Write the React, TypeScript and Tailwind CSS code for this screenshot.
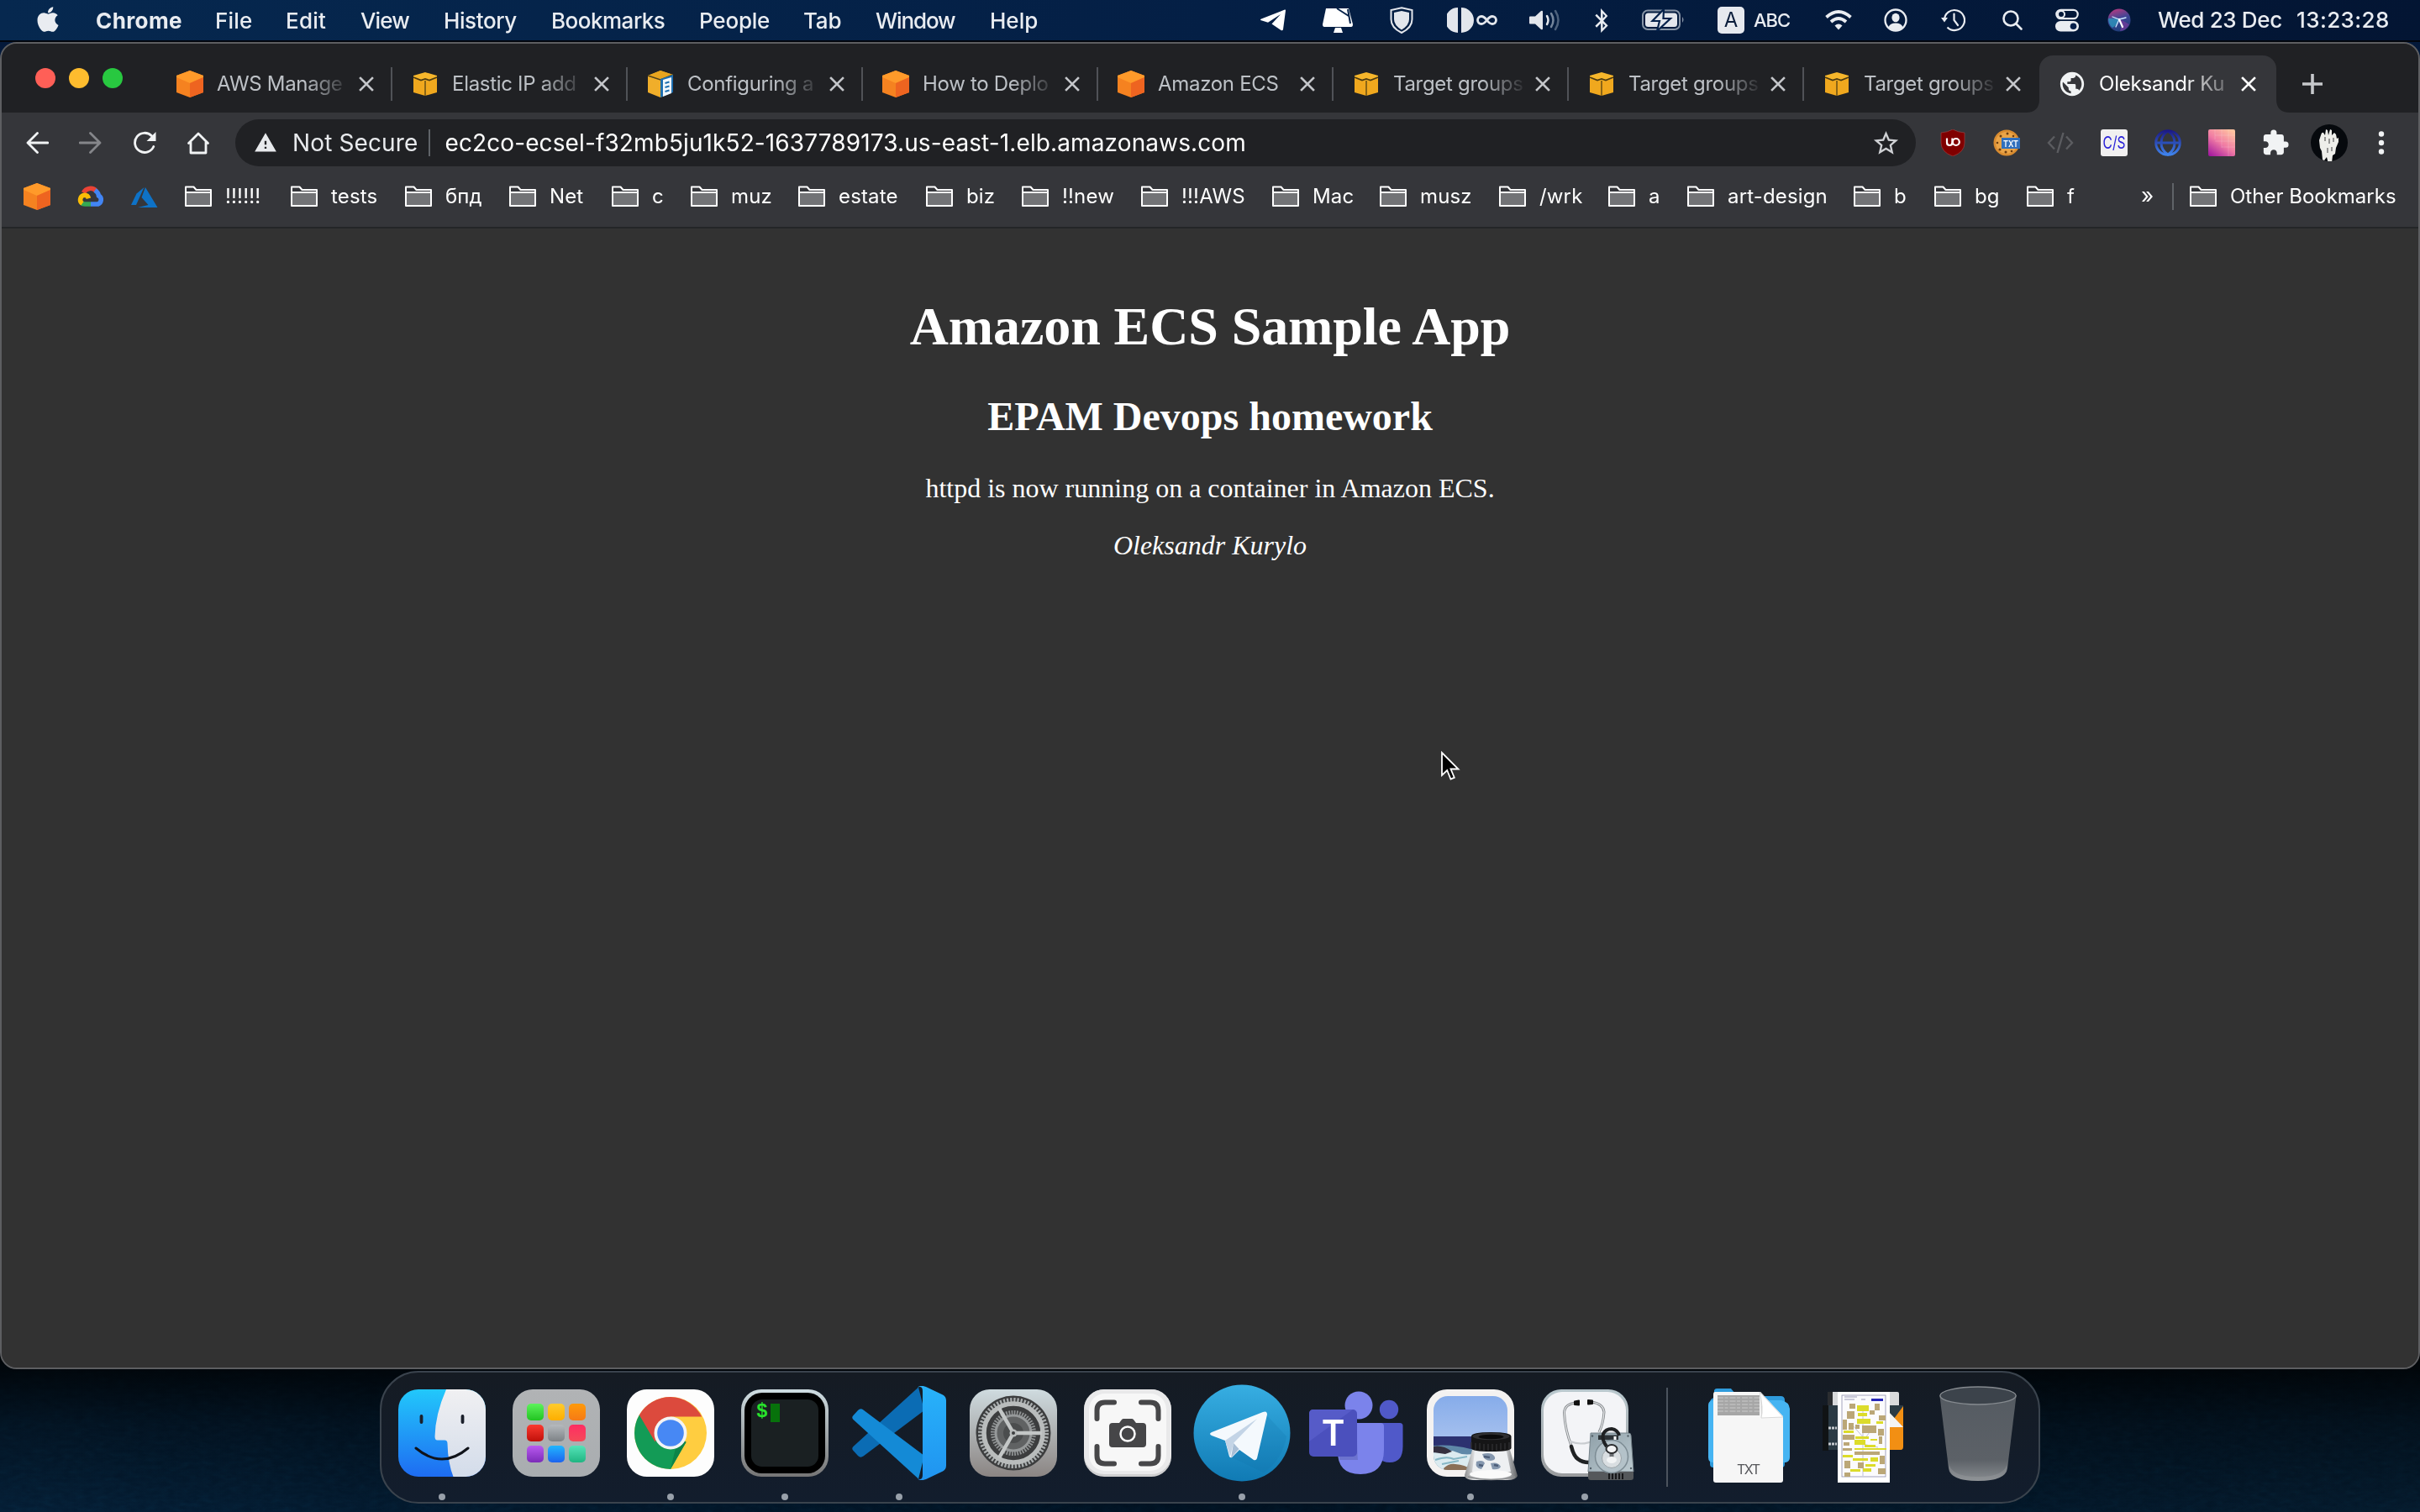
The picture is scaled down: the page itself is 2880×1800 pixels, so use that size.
import React from "react";
import { FaApple, FaBluetoothB } from "react-icons/fa";
import { MdWarning, MdStarBorder, MdExtension, MdPublic } from "react-icons/md";

/* ---------- favicons ---------- */

const OrangeCube = () => (
  <svg viewBox="0 0 32 32" className="size-8 shrink-0">
    <path d="M16 0 32 6v20l-16 6L0 26V6z" fill="#f58220" />
    <path d="M16 0 32 6v2L16 15 0 8V6z" fill="#ff9a2a" />
    <path d="M16 15 32 8v18l-16 6z" fill="#ee6420" />
  </svg>
);

const YellowCube = () => (
  <svg viewBox="0 0 32 32" className="size-8 shrink-0">
    <path d="M2 7h28v19l-14 4-14-4z" fill="#f0a81e" />
    <path d="M16 2 30 6v3l-14 4L2 9V6z" fill="#f6b62b" />
    <path d="M2 8l9 3.500 5-1.500 5 1.500L30 8" stroke="#4c3a10" strokeWidth="1.800" fill="none" />
    <path d="M16 12v18" stroke="#8a6516" strokeWidth="2" />
  </svg>
);

const DocCube = () => (
  <svg viewBox="0 0 32 32" className="size-8 shrink-0">
    <path d="M16 0 31 5v20l-15 7L1 26V6z" fill="#f0ae2a" />
    <path d="M16 0 31 5 16 10 1 6z" fill="#e9a51f" />
    <path d="M1 6l15 5 15-6" stroke="#51421b" strokeWidth="1.6" fill="none" />
    <path d="M16 10 31 5v21l-15 6z" fill="#1f6fb0" />
    <path d="M19 11l10-3v19l-10 4z" fill="#f3f8fc" />
    <path d="M21.500 15l5-1.500M21.500 20l5-1.500M21.500 25l5-1.500" stroke="#1f6fb0" strokeWidth="2" />
  </svg>
);

const CloseIcon = ({ className }: { className: string }) => (
  <svg viewBox="0 0 18 18" className={className} stroke="currentColor" strokeWidth="2.600" strokeLinecap="square">
    <path d="M2 2l14 14M16 2 2 16" />
  </svg>
);

/* ---------- menu bar ---------- */

const menus: [string, string][] = [
  ["File", "w-[84px] tracking-[0.2px]"],
  ["Edit", "w-[89px] tracking-[0.2px]"],
  ["View", "w-[99px] tracking-[-0.9px]"],
  ["History", "w-[128px] tracking-[-0.4px]"],
  ["Bookmarks", "w-[176px] tracking-[-0.5px]"],
  ["People", "w-[124px] tracking-[-0.2px]"],
  ["Tab", "w-[86px] tracking-[-0.2px]"],
  ["Window", "w-[136px] tracking-[-1.1px]"],
  ["Help", "w-[80px]"],
];

function MenuBar() {
  return (
    <header className="flex h-[50px] items-center border-b-2 border-[#02060e] bg-linear-to-r from-[#06284f] via-[#041f45] to-[#031533] text-[26px] font-medium text-[#e9ecf1]">
      <div className="flex w-[114px] justify-center pb-[3px]">
        <FaApple className="size-[34px]" />
      </div>
      <span className="w-[142px] font-bold tracking-[0.4px]">Chrome</span>
      {menus.map(([m, cls]) => (
        <span key={m} className={cls}>
          {m}
        </span>
      ))}

      <div className="ml-[242px] flex items-center">
        <svg viewBox="0 0 30 26" className="h-[26px] w-[30px] shrink-0" fill="#fff">
          <path d="M29 .5 1 11.500q-2 1 0 1.800l8 2.400L24 6 13.500 17.500 24.500 25q2 1 2.500-1L30 1.500Q30 0 29 .5z" />
        </svg>
        <svg viewBox="0 0 36 31" className="ml-11 h-[31px] w-9 shrink-0">
          <path d="M4 1h27l5 19q0 3-2 3H2q-2 0-2-3z" fill="#fff" />
          <path d="M15 24h7l2 6H13z" fill="#fff" />
          <path d="M17 1l14 9M30 2l3 17" stroke="#06234a" strokeWidth="2" />
        </svg>
        <svg viewBox="0 0 28 32" className="ml-11 h-8 w-7 shrink-0">
          <path d="M14 1.200 26.500 4v11q0 10-12.500 16Q1.500 25 1.500 15V4z" fill="none" stroke="#e3e6ec" strokeWidth="2" />
          <path d="M14 5 23 7v8q0 7-9 12.500Q5 22 5 15V7z" fill="#e3e6ec" />
        </svg>
        <svg viewBox="0 0 60 32" className="ml-10 h-8 w-[60px] shrink-0">
          <path d="M13 1v30A15 15 0 0 1 13 1zM17 1v30A15 15 0 0 0 17 1z" fill="#e3e6ec" />
          <path d="M47.500 16c-3-4-5-4.500-6.500-4.500a4.500 4.500 0 0 0 0 9c1.500 0 3.500-.5 6.500-4.500s5-4.500 6.500-4.500a4.500 4.500 0 0 1 0 9c-1.500 0-3.500-.5-6.500-4.500z" fill="none" stroke="#e3e6ec" strokeWidth="2.800" />
        </svg>
        <svg viewBox="0 0 37 26" className="ml-[38px] h-[26px] w-[37px] shrink-0" fill="none" strokeWidth="2.500" strokeLinecap="round">
          <path d="M1 8.500h6L14 2q2-1 2 1v20q0 2-2 1l-7-6.500H1q-1 0-1-1v-7q0-1 1-1z" fill="#e3e6ec" />
          <path d="M21 8q3 5 0 10" stroke="#e3e6ec" />
          <path d="M26 5q5 8 0 16" stroke="#75869c" />
          <path d="M31 2q7 11 0 22" stroke="#4d617c" />
        </svg>
        <FaBluetoothB className="ml-[37px] h-[29px] w-6 shrink-0" />
        <svg viewBox="0 0 51 26" className="ml-9 h-[26px] w-[51px] shrink-0">
          <rect x="1" y="1.500" width="44" height="22.500" rx="6" fill="none" stroke="#8693a5" strokeWidth="2" />
          <rect x="4" y="4.500" width="38" height="16.500" rx="3.500" fill="#e3e6ec" />
          <path d="M48 9q3 3.500 0 7z" fill="#8693a5" />
          <path d="M26 0 12.500 14H21l-3 12L34 11h-8.500z" fill="#e3e6ec" stroke="#05214a" strokeWidth="2.200" />
        </svg>
        <span className="ml-[39px] flex size-8 items-center justify-center rounded-[5px] bg-[#e6e9ef] text-[24px] font-normal text-[#0a1d3c]">A</span>
        <span className="ml-[11px] w-[45px] text-[22px] tracking-[-1px]">ABC</span>
        <svg viewBox="0 0 32 24" className="ml-10 h-6 w-8 shrink-0" fill="none" stroke="#e9ecf1" strokeWidth="3.800">
          <path d="M1.500 8.500q14.500-13 29 0M7 14q9-8 18 0" />
          <path d="M11.500 18.500q4.500-4 9 0L16 23.500z" fill="#e9ecf1" stroke="none" />
        </svg>
        <svg viewBox="0 0 28 28" className="ml-[38px] size-7 shrink-0">
          <circle cx="14" cy="14" r="12.500" fill="none" stroke="#e9ecf1" strokeWidth="2.300" />
          <ellipse cx="14" cy="11" rx="4.600" ry="5.300" fill="#e9ecf1" />
          <path d="M5.500 22.500Q7 17.500 14 17.500t8.500 5Q19 26 14 26t-8.500-3.500z" fill="#e9ecf1" />
        </svg>
        <svg viewBox="0 0 29 28" className="ml-10 h-7 w-[29px] shrink-0" fill="none" stroke="#e9ecf1" strokeWidth="2.200">
          <path d="M4 14A12 12 0 1 1 7.500 22.500" />
          <path d="M15.500 6.500V14l4.500 6" strokeLinecap="round" />
          <path d="M0 11h8l-4 5.500z" fill="#e9ecf1" stroke="none" />
        </svg>
        <svg viewBox="0 0 24 24" className="ml-11 size-6 shrink-0" fill="none" stroke="#e9ecf1" strokeWidth="2.600" strokeLinecap="round">
          <circle cx="10" cy="10" r="8.500" />
          <path d="M16.500 16.500 22.500 22.500" />
        </svg>
        <svg viewBox="0 0 28 28" className="ml-[39px] size-7 shrink-0">
          <rect x="1.300" y="1.800" width="25.400" height="10.400" rx="5.200" fill="none" stroke="#e9ecf1" strokeWidth="2.200" />
          <circle cx="7" cy="7" r="4" fill="none" stroke="#e9ecf1" strokeWidth="2" />
          <rect y="15" width="28" height="12.500" rx="6.200" fill="#e9ecf1" />
          <circle cx="21.500" cy="21.200" r="3.800" fill="#06204a" />
        </svg>
        <svg viewBox="0 0 28 28" className="ml-[34px] size-7 shrink-0">
          <defs>
            <linearGradient id="siri" x1=".3" y1="0" x2=".6" y2="1">
              <stop offset="0" stopColor="#b53a80" />
              <stop offset=".45" stopColor="#3d4596" />
              <stop offset="1" stopColor="#1c3c76" />
            </linearGradient>
          </defs>
          <circle cx="14" cy="14" r="13.500" fill="url(#siri)" />
          <path d="M1 12q7-1 13 1-2 7-8 10-5-4-5-11z" fill="#2aa6c4" opacity=".65" />
          <path d="M15 13q3 6 0 14 8-1 11-8-5-3-11-6z" fill="#7a3a9c" opacity=".7" />
          <path d="M6 10l8 3 8-2M14 13l-4 9" stroke="#cfe6ff" strokeWidth="1.300" strokeLinecap="round" fill="none" />
          <path d="M14 13l4 9" stroke="#fff" strokeWidth="2.200" strokeLinecap="round" />
        </svg>
        <span className="ml-8 w-[165px] pb-[2px] tracking-[-0.35px]">Wed 23 Dec</span>
        <span className="pb-[2px] tracking-[0.4px]">13:23:28</span>
      </div>
    </header>
  );
}

/* ---------- tab strip ---------- */

const tabs: { title: string; icon: () => React.JSX.Element }[] = [
  { title: "AWS Manage", icon: OrangeCube },
  { title: "Elastic IP add", icon: YellowCube },
  { title: "Configuring a", icon: DocCube },
  { title: "How to Deplo", icon: OrangeCube },
  { title: "Amazon ECS", icon: OrangeCube },
  { title: "Target groups", icon: YellowCube },
  { title: "Target groups", icon: YellowCube },
  { title: "Target groups", icon: YellowCube },
];

function TabStrip() {
  return (
    <div className="flex h-[82px] items-end bg-[#202124] text-[24px]">
      <div className="flex w-[185px] gap-4 self-start pt-[29px] pl-10">
        <span className="size-6 rounded-full bg-[#ff5f57]" />
        <span className="size-6 rounded-full bg-[#febc2e]" />
        <span className="size-6 rounded-full bg-[#28c840]" />
      </div>
      {tabs.map(({ title, icon: Icon }, i) => (
        <div key={i} className="flex h-[68px] w-[280px] shrink-0 items-center pl-[23px]">
          <Icon />
          <span
            className={
              title === "Amazon ECS"
                ? "ml-4 w-[154px] overflow-hidden whitespace-nowrap tracking-[-0.3px] text-[#bdc1c6]"
                : "ml-4 w-[154px] overflow-hidden whitespace-nowrap tracking-[-0.3px] text-[#bdc1c6] [mask-image:linear-gradient(to_right,black_68%,transparent_104%)]"
            }
          >
            {title}
          </span>
          <CloseIcon className="ml-[15px] size-[18px] shrink-0 text-[#c3c5c9]" />
          {i < 7 && <span className="ml-auto h-10 w-[2px] bg-[#505257]" />}
        </div>
      ))}
      <div className="relative flex h-[68px] w-[282px] shrink-0 items-center rounded-t-[16px] bg-[#35363a] pl-[22px]">
        <svg viewBox="0 0 16 16" className="absolute bottom-0 -left-4 size-4" fill="#35363a">
          <path d="M16 0v16H0Q16 16 16 0z" />
        </svg>
        <svg viewBox="0 0 16 16" className="absolute -right-4 bottom-0 size-4" fill="#35363a">
          <path d="M0 0v16h16Q0 16 0 0z" />
        </svg>
        <MdPublic className="size-[34px] shrink-0 text-[#f1f3f4]" />
        <span className="ml-[15px] w-[152px] overflow-hidden whitespace-nowrap tracking-[-0.2px] text-white [mask-image:linear-gradient(to_right,black_66%,transparent_112%)]">
          Oleksandr Ku
        </span>
        <CloseIcon className="ml-[17px] size-[18px] shrink-0 text-white" />
      </div>
      <div className="flex h-[68px] w-[86px] items-center justify-center">
        <svg viewBox="0 0 24 24" className="size-6" stroke="#c6c8cb" strokeWidth="3.600">
          <path d="M12 0v24M0 12h24" />
        </svg>
      </div>
    </div>
  );
}

/* ---------- toolbar ---------- */

function Toolbar() {
  return (
    <div className="flex h-[72px] items-center bg-[#35363a]">
      <div className="flex w-[278px] items-center gap-9 pl-7 text-[#f1f3f4]">
        <svg viewBox="0 0 28 28" className="size-7" fill="none" stroke="currentColor" strokeWidth="2.800" strokeLinecap="round" strokeLinejoin="round">
          <path d="M14.500 2.500 3 14l11.500 11.500M3.500 14H27" />
        </svg>
        <svg viewBox="0 0 28 28" className="size-7" fill="none" stroke="#85868a" strokeWidth="2.800" strokeLinecap="round" strokeLinejoin="round">
          <path d="M13.500 2.500 25 14 13.500 25.500M24.500 14H1" />
        </svg>
        <svg viewBox="0 0 28 28" className="size-7" fill="none" stroke="currentColor" strokeWidth="2.800" strokeLinecap="round">
          <path d="M22.500 5.800A11.600 11.600 0 1 0 24.800 18.500" />
          <path d="M27.500 1v11H16.500z" fill="currentColor" stroke="none" />
        </svg>
        <svg viewBox="0 0 28 28" className="size-7" fill="none" stroke="currentColor" strokeWidth="2.800" strokeLinejoin="round" strokeLinecap="round">
          <path d="M2.500 14.500 14 3l11.500 11.500M5 13.500V26h18V13.500" />
        </svg>
      </div>
      <div className="flex h-14 w-[2000px] shrink-0 items-center rounded-full bg-[#202124] pr-[18px] pl-[22px] text-[28px] tracking-[0.13px] text-white">
        <MdWarning className="size-[28px] text-[#e8eaed]" />
        <span className="ml-[18px] text-[#e8eaed]">Not Secure</span>
        <span className="ml-[13px] h-8 w-[2px] bg-[#5f6368]" />
        <span className="ml-[17px] tracking-[0.11px]">ec2co-ecsel-f32mb5ju1k52-1637789173.us-east-1.elb.amazonaws.com</span>
        <MdStarBorder className="ml-auto size-[35px] text-[#cfd1d4]" />
      </div>
      <div className="flex items-center gap-8 pl-[28px]">
        <svg viewBox="0 0 32 32" className="size-8">
          <path d="M16 0q6 3.500 14 4v12q0 11-14 16Q2 27 2 16V4q8-.5 14-4z" fill="#800000" stroke="#a54a4a" strokeWidth=".6" />
          <path d="M9 10.500v5q0 3.500 3.200 3.500t3.200-3.500v-5" fill="none" stroke="#fff" strokeWidth="2.200" />
          <circle cx="19.800" cy="15" r="4" fill="none" stroke="#fff" strokeWidth="2.200" />
        </svg>
        <svg viewBox="0 0 32 32" className="size-8">
          <circle cx="16" cy="16" r="15.500" fill="#d98c30" />
          <circle cx="16" cy="16" r="13" fill="#eaa447" />
          <g fill="#6b3d10">
            <circle cx="9" cy="8" r="1.500" />
            <circle cx="17" cy="5" r="1.500" />
            <circle cx="24" cy="8" r="1.300" />
            <circle cx="5" cy="16" r="1.300" />
            <circle cx="8" cy="24" r="1.600" />
            <circle cx="15" cy="27" r="1.500" />
            <circle cx="22" cy="26" r="1.300" />
          </g>
          <rect x="10" y="10" width="22" height="13" fill="#2f6fbd" />
          <text x="21" y="20.500" fontSize="11" fontWeight="600" textAnchor="middle" fill="#fff" fontFamily="Inter, sans-serif" textLength="18" lengthAdjust="spacingAndGlyphs">TXT</text>
        </svg>
        <svg viewBox="0 0 32 32" className="size-8" fill="none" stroke="#5b5c60" strokeWidth="2.400">
          <path d="M9 8.500 2 16l7 7.500M23 8.500l7 7.500-7 7.500M19.500 4l-7 24" />
        </svg>
        <svg viewBox="0 0 32 32" className="size-8">
          <rect width="32" height="32" rx="3" fill="#f1f0f0" />
          <text x="16" y="23" fontSize="20" textAnchor="middle" fill="#2a22d8" fontFamily="Inter, sans-serif" textLength="27" lengthAdjust="spacingAndGlyphs">C/S</text>
        </svg>
        <svg viewBox="0 0 32 32" className="size-8" fill="none" strokeWidth="3">
          <defs>
            <linearGradient id="globe" x1="0" y1="0" x2="0" y2="1">
              <stop offset="0" stopColor="#1c1a86" />
              <stop offset="1" stopColor="#3f83ec" />
            </linearGradient>
          </defs>
          <circle cx="16" cy="16" r="14.300" stroke="url(#globe)" />
          <path d="M16 2q-8 5-8 14t8 14q8-5 8-14T16 2z" stroke="url(#globe)" />
          <path d="M3 16h26" stroke="#2b4fb8" />
        </svg>
        <svg viewBox="0 0 32 32" className="size-8">
          <defs>
            <linearGradient id="swatch" x1=".1" y1="1" x2=".8" y2="0">
              <stop offset="0" stopColor="#a3199f" />
              <stop offset=".5" stopColor="#f07ba4" />
              <stop offset="1" stopColor="#ffc3a0" />
            </linearGradient>
          </defs>
          <rect width="32" height="32" rx="2" fill="url(#swatch)" />
          <path d="M8 0v12M16 0v22M24 0v32M8 7h24M8 14h24M16 21h16" stroke="#fff" strokeOpacity=".16" />
        </svg>
        <MdExtension className="-mx-px size-[34px] text-[#f1f3f4]" />
        <svg viewBox="0 0 44 44" className="-mx-[6px] size-11">
          <circle cx="22" cy="22" r="22" fill="#06090d" />
          <path d="M12 13q1-4 3-3l2 3 1-7 2 1 1 6 2-7 2 1v6l3-3 2 2 1 5 2-1v5l-3 7-1 7-3 2-1 9-4 1-2-8-3 4-2-1-1-10-2-4-1-9z" fill="#eeeeea" />
          <path d="M17 15v5M22 17v6M27 16v5M20 28v6M25 27v5" stroke="#666" strokeWidth="1.300" />
        </svg>
      </div>
      <svg viewBox="0 0 8 28" className="ml-[42px] h-7 w-2" fill="#f1f3f4">
        <circle cx="4" cy="3.500" r="3.200" />
        <circle cx="4" cy="14" r="3.200" />
        <circle cx="4" cy="24.500" r="3.200" />
      </svg>
    </div>
  );
}

/* ---------- bookmarks ---------- */

const Folder = () => (
  <svg viewBox="0 0 32 26" className="h-[26px] w-8 shrink-0">
    <path d="M1 24V1.500h9.500l3 3.500H31v19z" fill="#35363a" stroke="#fff" strokeWidth="2" strokeLinejoin="round" />
    <path d="M2 9h28v14H2z" fill="#727376" />
    <path d="M1 8h30" stroke="#fff" strokeWidth="2" />
  </svg>
);

const bookmarks: [string, string][] = [
  ["!!!!!!", "w-[126px]"],
  ["tests", "w-[136px]"],
  ["бпд", "w-[124px]"],
  ["Net", "w-[122px]"],
  ["c", "w-[94px]"],
  ["muz", "w-[128px]"],
  ["estate", "w-[152px]"],
  ["biz", "w-[114px]"],
  ["!!new", "w-[142px]"],
  ["!!!AWS", "w-[156px]"],
  ["Mac", "w-[128px]"],
  ["musz", "w-[142px]"],
  ["/wrk", "w-[130px]"],
  ["a", "w-[94px]"],
  ["art-design", "w-[198px]"],
  ["b", "w-[96px]"],
  ["bg", "w-[110px]"],
  ["f", "w-[136px]"],
];

function BookmarksBar() {
  return (
    <div className="flex h-[66px] items-center border-b-2 border-[#242527] bg-[#35363a] pb-[8px] text-[24px] tracking-[0.15px] text-white">
      <div className="flex w-[218px] items-center gap-8 pl-[26px]">
        <OrangeCube />
        <svg viewBox="0 0 32 32" className="size-8" fill="none" strokeWidth="5.600">
          <path d="M7.500 11.500A9 9 0 0 1 22.500 9.500" stroke="#ea4335" />
          <path d="M21 8.500q4 2.500 4.500 6.500A5.500 5.500 0 0 1 24.500 25H16" stroke="#4285f4" />
          <path d="M16 25H9q-2.500 0-4-1.500" stroke="#34a853" />
          <path d="M6 24.300a5.500 5.500 0 0 1 2.500-10q4 0 5 4" stroke="#fbbc05" />
        </svg>
        <svg viewBox="0 0 32 32" className="size-8" fill="#0e72c6">
          <path d="M15.500 5 6.500 12.500 0 26h6z" />
          <path d="M17 5 12.500 17 20.500 26 8 29h23.500z" />
        </svg>
      </div>
      {bookmarks.map(([label, w]) => (
        <div key={label} className={`flex shrink-0 items-center gap-[16px] ${w}`}>
          <Folder />
          {label}
        </div>
      ))}
      <span className="flex w-[37px] justify-start pb-1 text-[26px]">»</span>
      <span className="h-8 w-[2px] bg-[#5f6368]" />
      <div className="ml-[19px] flex items-center gap-[16px] tracking-[0px] whitespace-nowrap">
        <Folder />
        Other Bookmarks
      </div>
    </div>
  );
}

/* ---------- page ---------- */

function Page() {
  return (
    <main className="relative flex flex-1 flex-col items-center bg-[#323232] pt-20 font-['Liberation_Serif',serif] text-white">
      <h1 className="text-[64px] leading-[74px] font-bold tracking-[-0.1px]">Amazon ECS Sample App</h1>
      <h2 className="mt-[42px] text-[48px] leading-[55px] font-bold">EPAM Devops homework</h2>
      <p className="mt-10 text-[32px] leading-[37px]">httpd is now running on a container in Amazon ECS.</p>
      <p className="mt-[31px] text-[32px] leading-[37px] italic">Oleksandr Kurylo</p>
      <svg viewBox="0 0 24 36" className="absolute top-[622px] left-[1712px] h-9 w-6">
        <path d="M2 2v27l6.200-6 4.300 10.500 4.300-1.800L12.500 21.500H21.500z" fill="#000" stroke="#fff" strokeWidth="1.800" />
      </svg>
    </main>
  );
}

/* ---------- dock icons ---------- */

const Finder = () => (
  <svg viewBox="0 0 104 104" className="size-[104px]">
    <defs>
      <linearGradient id="fb" x1="0" y1="0" x2="0" y2="1">
        <stop offset="0" stopColor="#22c8fb" />
        <stop offset="1" stopColor="#1e6cf2" />
      </linearGradient>
      <linearGradient id="fw" x1="0" y1="0" x2="0" y2="1">
        <stop offset="0" stopColor="#f0f0f2" />
        <stop offset="1" stopColor="#d3dcea" />
      </linearGradient>
      <clipPath id="fc">
        <rect width="104" height="104" rx="24" />
      </clipPath>
    </defs>
    <g clipPath="url(#fc)">
      <rect width="104" height="104" fill="url(#fb)" />
      <path d="M57 0Q44 30 43.500 56q0 4.500 3 4.500H55q3.500 0 3.500 4Q59 88 65.500 104H104V0z" fill="url(#fw)" />
    </g>
    <path d="M27.500 32v7M76.500 32v7" stroke="#1a1f2a" strokeWidth="3.800" strokeLinecap="round" />
    <path d="M21 70q31 26 62 0" stroke="#10131a" strokeWidth="3" strokeLinecap="round" fill="none" />
  </svg>
);

const launchColors: [string, string][] = [
  ["#5df35c", "#22c322"], ["#ffcb2d", "#fdae00"], ["#ff9a0a", "#f57a16"],
  ["#fb3a2f", "#c0100a"], ["#b5b9bd", "#7d8286"], ["#ff2d63", "#f54a58"],
  ["#b95af0", "#7b2bb8"], ["#21b6ff", "#1c63ee"], ["#55e3b8", "#20b582"],
];

const Launchpad = () => (
  <div className="grid size-[104px] grid-cols-[repeat(3,20px)] grid-rows-[repeat(3,20px)] content-center justify-center gap-[5px] rounded-[24px] bg-linear-to-b from-[#b1b3b5] to-[#a9adb0]">
    {launchColors.map(([a, b]) => (
      <span key={a} className="rounded-[5px]" style={{ backgroundImage: `linear-gradient(${a}, ${b})` }} />
    ))}
  </div>
);

const ChromeApp = () => (
  <svg viewBox="0 0 104 104" className="size-[104px]">
    <rect width="104" height="104" rx="24" fill="#fdfdfd" />
    <circle cx="52" cy="52" r="43" fill="#ffcd40" />
    <path d="M52 52 14.800 30.500A43 43 0 0 0 52 95L70.600 62.700z" fill="#139b56" />
    <path d="M52 52 70.600 62.700 52 95 58 70z" fill="#0d8448" />
    <path d="M52 9A43 43 0 0 1 89.200 32.500H52L33.500 62.500 14.800 30.500A43 43 0 0 1 52 9z" fill="#dc4a3d" />
    <circle cx="52" cy="52" r="19.500" fill="#f4f4f4" />
    <circle cx="52" cy="52" r="15.800" fill="#4788f4" />
  </svg>
);

const Terminal = () => (
  <div className="size-[104px] rounded-[24px] bg-linear-to-b from-[#cfdde2] to-[#767676] p-1">
    <div className="size-full rounded-[21px] bg-black p-2">
      <div className="flex size-full items-start gap-[3px] rounded-[13px] bg-[#1a2022] pt-[3px] pl-[6px] font-['Liberation_Mono',monospace] text-[23px] leading-[24px] font-bold text-[#28e22c]">
        $<span className="mt-[2px] h-[22px] w-[11px] bg-[#07720b]" />
      </div>
    </div>
  </div>
);

const VsCode = () => (
  <svg viewBox="0 0 112 112" className="size-[112px]">
    <defs>
      <linearGradient id="vs" x1="0" y1="0" x2="0" y2="1">
        <stop offset="0" stopColor="#28b2fa" />
        <stop offset="1" stopColor="#2094f0" />
      </linearGradient>
    </defs>
    <path d="M79 1.500 1.500 72q-2.500 2.500 0 5L7 83q3 3 6.500.5L86 29z" fill="#0b6cb4" />
    <path d="M79 110.500 1.500 40q-2.500-2.500 0-5L7 29q3-3 6.500-.5L86 83z" fill="#148ad6" />
    <path d="M78 1.500Q82-1.500 88 1l20 9.500q4 2 4 7v77q0 5-4 7L88 111q-6 2.500-10-.5 6 2 6-4.500V6q0-6.500-6-4.500z" fill="url(#vs)" />
  </svg>
);

const Settings = () => (
  <svg viewBox="0 0 104 104" className="size-[104px]">
    <defs>
      <linearGradient id="st" x1="0" y1="0" x2="0" y2="1">
        <stop offset="0" stopColor="#cfdbdf" />
        <stop offset="1" stopColor="#8b8583" />
      </linearGradient>
    </defs>
    <rect width="104" height="104" rx="24" fill="url(#st)" />
    <circle cx="52" cy="52" r="44.500" fill="#3c3d3e" />
    <circle cx="52" cy="52" r="39.500" fill="none" stroke="#a9adae" strokeWidth="5" strokeDasharray="2.300 1.836" />
    <circle cx="52" cy="52" r="35" fill="none" stroke="#b9bcbc" strokeWidth="5.500" />
    <circle cx="52" cy="52" r="24.500" fill="none" stroke="#8f9293" strokeWidth="5" strokeDasharray="1.800 1.407" />
    <circle cx="52" cy="52" r="21" fill="#606263" stroke="#96999a" strokeWidth="3" />
    <circle cx="52" cy="52" r="12" fill="#4b4d4e" />
    <path d="M52 52h34M52 52 35 22.500M52 52 35 81.500" stroke="#c3c6c6" strokeWidth="4.500" />
    <circle cx="52" cy="52" r="4.500" fill="#b9bcbc" />
    <circle cx="52" cy="52" r="2" fill="#3c3d3e" />
  </svg>
);

const Capture = () => (
  <svg viewBox="0 0 104 104" className="size-[104px]">
    <rect width="104" height="104" rx="24" fill="#cfcfd0" />
    <rect width="104" height="101" rx="24" fill="#e9e9ea" />
    <rect x="6" y="5" width="92" height="92" rx="19" fill="#f7f7f7" />
    <path d="M15.500 35V25q0-9.500 9.500-9.500h11M68 15.500h11q9.500 0 9.500 9.500v10M88.500 68v11q0 9.500-9.500 9.500H68M36 88.500H25q-9.500 0-9.500-9.500V68" fill="none" stroke="#474749" strokeWidth="6" strokeLinecap="round" />
    <path d="M34 40h8l3-4q1-1 2-1h10q1 0 2 1l3 4h8q4 0 4 4v21q0 4-4 4H34q-4 0-4-4V44q0-4 4-4z" fill="#464648" />
    <circle cx="52" cy="53" r="8.500" fill="none" stroke="#fff" strokeWidth="2.500" />
  </svg>
);

const Telegram = () => (
  <svg viewBox="0 0 116 116" className="size-[116px]">
    <defs>
      <linearGradient id="tg" x1="0" y1="0" x2="0" y2="1">
        <stop offset="0" stopColor="#37aee2" />
        <stop offset="1" stopColor="#107ab4" />
      </linearGradient>
    </defs>
    <circle cx="58" cy="58" r="57.500" fill="url(#tg)" />
    <path d="M84 33 111 62Q106 90 84 105L46 87z" fill="#0f6fa6" opacity=".18" />
    <path d="M83 33 22 57q-4 2 0 4l16 6 5 19q1.500 2 3 1l9-9 17 12q3 1 4-2L88 36q0-5-5-3z" fill="#f4f9fd" />
    <path d="M38 67 76 41 48 70l-4 16z" fill="#c3d4e6" />
    <path d="M48 70 54.500 77 45 87.500z" fill="#a7bed6" />
  </svg>
);

const Teams = () => (
  <svg viewBox="0 0 112 100" className="h-[100px] w-28">
    <circle cx="95" cy="22" r="11.200" fill="#5059c9" />
    <path d="M84 38h24q3.500 0 3.500 3.500V66Q111.500 85 96 85q-9 0-12-5z" fill="#5059c9" />
    <circle cx="59" cy="17" r="16.500" fill="#7b83eb" />
    <path d="M35 38h50q4 0 4 4v28Q89 99 61 99T34 70z" fill="#7b83eb" />
    <path d="M35 38h22q0 36 1 44H36z" fill="#000" opacity=".12" />
    <rect y="22" width="57" height="56" rx="5" fill="#4b50bd" />
    <path d="M0 60V27q0-5 5-5h47z" fill="#565bc8" />
    <text x="28.500" y="65" fontSize="42" fontWeight="600" textAnchor="middle" fill="#fff" fontFamily="Inter, sans-serif">T</text>
  </svg>
);

const Preview = () => (
  <svg viewBox="0 0 112 112" className="size-[112px] overflow-visible">
    <defs>
      <linearGradient id="sky" x1="0" y1="0" x2="0" y2="1">
        <stop offset="0" stopColor="#86acea" />
        <stop offset="1" stopColor="#a5c0ee" />
      </linearGradient>
      <linearGradient id="lens" x1="0" y1="0" x2="1" y2="0">
        <stop offset="0" stopColor="#8c8e90" />
        <stop offset=".2" stopColor="#e6e7e8" />
        <stop offset=".75" stopColor="#dcdddf" />
        <stop offset="1" stopColor="#5f6163" />
      </linearGradient>
      <clipPath id="pc">
        <rect x="12" y="12" width="88" height="88" rx="17" />
      </clipPath>
    </defs>
    <rect x="4" y="4" width="104" height="104" rx="24" fill="#f4f2f1" />
    <g clipPath="url(#pc)">
      <rect x="12" y="12" width="88" height="50" fill="url(#sky)" />
      <rect x="12" y="60" width="88" height="16" fill="#2c3170" />
      <path d="M12 71q22-2 44 4h44v30H12z" fill="#5f88a8" />
      <path d="M10 80q20-6 30-1t28 0v22H12z" fill="#dcebf0" />
      <path d="M14 88q14-5 22-1l16-3M22 93l20-4" stroke="#86b7c6" strokeWidth="2" fill="none" />
      <path d="M12 72q11-2 22 6l-8 3-14-2z" fill="#35303f" />
      <path d="M24 98q6-6 14-5 12 1 18 6l-6 5H26z" fill="#8a6f57" />
    </g>
    <path d="M58 76h45l9 31q-2 5-12 5H62q-13 0-13-6z" fill="url(#lens)" />
    <path d="M61 78h38l5 24H58z" fill="#eef0f2" />
    <path d="M70 81q10-3 14 2 4 5-4 6-8 0-10-8zM63 90q8-3 10 2l-4 7q-8-1-6-9zM80 92q9-2 12 4-2 4-10 3z" fill="#8597ae" />
    <path d="M72 84l7 1M66 94l5 1M84 94l5 1" stroke="#4c5d78" strokeWidth="2.500" />
    <ellipse cx="80" cy="105" rx="25" ry="5" fill="#fafafa" />
    <path d="M53 108q27 7 56 0" stroke="#8b8d8f" strokeWidth="1.500" fill="none" />
    <path d="M57 60q0-5 23.500-5t24 5v14q-1 4-24 4t-23.500-4z" fill="#151516" />
    <ellipse cx="80.500" cy="60" rx="22" ry="4.200" fill="#2f2f31" />
    <ellipse cx="80.500" cy="60.500" rx="15" ry="2.800" fill="#0a0a0b" />
    <path d="M57 67v7M62 68v8M67 68v8M72 69v8M77 69v8M82 69v8M87 69v8M92 68v8M97 68v8M102 67v8" stroke="#2d2d2f" strokeWidth="1.500" />
  </svg>
);

const DiskUtility = () => (
  <svg viewBox="0 0 112 112" className="size-[112px] overflow-visible">
    <defs>
      <linearGradient id="du" x1="0" y1="0" x2="0" y2="1">
        <stop offset="0" stopColor="#b9c8ce" />
        <stop offset="1" stopColor="#9a9c9e" />
      </linearGradient>
      <linearGradient id="dk" x1="0" y1="0" x2="1" y2="1">
        <stop offset="0" stopColor="#8fa0a9" />
        <stop offset="1" stopColor="#bccad0" />
      </linearGradient>
    </defs>
    <rect x="4" y="4" width="104" height="104" rx="24" fill="url(#du)" />
    <rect x="7" y="7" width="98" height="97" rx="22" fill="#f3f4f7" />
    <path d="M46 20q-14 1-14.500 12 1 20 8.500 39M64 19q14 2 15 12-1 14-6 24" fill="none" stroke="#85898d" strokeWidth="3" />
    <path d="M46 20q-14 1-14.500 12 1 20 8.500 39M64 19q14 2 15 12-1 14-6 24" fill="none" stroke="#e9ebed" strokeWidth="1.200" />
    <path d="M39 66q14 6 30-2" fill="none" stroke="#c9ccd0" strokeWidth="2" />
    <path d="M40 72q3 12 8 15 5 4 13 4" stroke="#202224" strokeWidth="4.600" fill="none" strokeLinecap="round" />
    <path d="M44 18.500l5-1v5l-5-.5zM60 17l5 .5V21l-5 .5z" fill="#111" stroke="#111" strokeWidth="2" strokeLinejoin="round" />
    <path d="M63 56h45q3 0 3 3l3 43H60z" fill="url(#dk)" stroke="#76838a" strokeWidth="1" />
    <path d="M60 102h54v7q0 3-3 3H63q-3 0-3-3z" fill="#55585b" />
    <path d="M85 104v7M89 104v7M93 104v7M97 104v7M101 104v7" stroke="#17181a" strokeWidth="2" />
    <rect x="72" y="58.500" width="24" height="5.500" fill="#2c3236" />
    <path d="M92 60v4" stroke="#fff" strokeWidth="3" />
    <circle cx="88" cy="84" r="19.500" fill="#b4c2c9" stroke="#7d8c94" strokeWidth="1.500" />
    <circle cx="88" cy="86" r="11.500" fill="#d9dee1" stroke="#9aa3a8" />
    <path d="M88 76v11" stroke="#6a6f73" strokeWidth="5" />
    <ellipse cx="88" cy="88" rx="6" ry="4" fill="#f2f4f5" />
    <path d="M82 72q-6-8-4-15 3-6 10-6 7 1 9 8" fill="none" stroke="#1f2123" strokeWidth="4" />
    <ellipse cx="88" cy="75" rx="6.500" ry="5" fill="#f2f3f4" stroke="#2a2c2e" strokeWidth="2" />
    <g fill="#56626a">
      <circle cx="65" cy="59.500" r="1.200" />
      <circle cx="107.500" cy="59.500" r="1.200" />
      <circle cx="63" cy="98" r="1.200" />
      <circle cx="111" cy="98" r="1.200" />
    </g>
  </svg>
);

const TxtStack = () => (
  <svg viewBox="0 0 98 112" className="-mb-[6px] h-28 w-[98px]">
    <path d="M7 2q1-2 3-2h17l5 6 2 3h52q5 0 5 5v76q0 4-4 4H6q-4 0-4-4V17q0-5 5-6z" fill="#2f9bdc" />
    <path d="M5 14h82q9 2 10 10v58q0 5-5 6H6q-6 0-6-6V20q0-5 5-6z" fill="#46b4f2" />
    <path d="M8 4h54l27 29v76q0 3-3 3H9q-3 0-3-3V7q0-3 2-3z" fill="#f6f6f6" />
    <path d="M11 8h50v24H11z" fill="#a6a6a6" />
    <path d="M11 11h50M11 15h50M11 19h50M11 23h50M11 27h50" stroke="#bfbfbf" strokeWidth="1.500" strokeDasharray="7 1.500 4 2" />
    <path d="M62 4 89 34q-6-3-26 0z" fill="#dcdcdc" />
    <path d="M61 4q5 20 2 31l26-1z" fill="#fff" stroke="#cfcfcf" strokeWidth=".8" />
    <text x="48" y="102" fontSize="16" textAnchor="middle" fill="#55565a" fontFamily="Inter, sans-serif" textLength="28">TXT</text>
  </svg>
);

const mapBlocks: [number, number, number, number, 0 | 1][] = [
  [32, 14, 7, 6, 0], [41, 16, 14, 7, 1], [62, 14, 6, 8, 0], [29, 23, 9, 9, 0], [42, 25, 11, 4, 1], [56, 22, 6, 5, 0],
  [24, 33, 5, 12, 0], [31, 37, 6, 8, 0], [41, 32, 16, 6, 1], [67, 28, 8, 6, 0], [64, 35, 8, 3, 1], [39, 39, 5, 5, 0],
  [47, 40, 17, 9, 0], [25, 46, 12, 3, 1], [24, 51, 14, 6, 0], [66, 44, 7, 8, 0], [39, 53, 16, 3, 1], [25, 60, 7, 4, 0],
  [38, 57, 13, 6, 1], [57, 56, 8, 2, 1], [67, 53, 4, 9, 0], [50, 63, 13, 3, 1], [38, 67, 38, 2, 1], [24, 67, 11, 3, 0],
  [38, 71, 30, 4, 0], [24, 75, 12, 3, 1], [68, 76, 6, 10, 0], [36, 79, 18, 3, 1], [57, 78, 9, 5, 1], [26, 82, 7, 9, 0],
  [42, 84, 7, 7, 0], [51, 86, 12, 3, 1], [33, 92, 12, 3, 1], [48, 91, 10, 4, 1], [66, 91, 9, 7, 0], [26, 96, 7, 5, 0],
];

const DocStack = () => (
  <svg viewBox="0 0 98 108" className="-mb-[10px] h-[108px] w-[98px]">
    <path d="M6 0h83q2 0 2 2v16H6z" fill="#d9dadc" />
    <path d="M6 0h6v18H6z" fill="#2b2d30" />
    <path d="M0 16h96v49q0 4-3 4H0z" fill="#2b3a44" />
    <path d="M0 16h7v54H0z" fill="#101315" />
    <path d="M79 40 96 17v48q0 4-3 4H79z" fill="#f28f13" />
    <path d="M79 24 96 42H79z" fill="#f3f3f3" />
    <path d="M7 43h10M7 62h10" stroke="#c8ccd0" strokeWidth="3" strokeDasharray="3 1" />
    <rect x="18" width="62" height="108" fill="#fff" />
    <rect x="23" y="4" width="52" height="97" fill="#fbfbfd" stroke="#8e8fae" strokeWidth=".8" />
    <rect x="58" y="8" width="14" height="3" fill="#2626b8" />
    <path d="M26 6h15M26 9h12M46 9h5" stroke="#9a9ab8" strokeWidth="1.200" />
    <path d="M48 20v80M36 40l14 16M62 40 50 56M38 60l28 6" stroke="#a9a9c4" strokeWidth=".7" />
    {mapBlocks.map(([x, y, w, h, bright], i) => (
      <rect key={i} x={x} y={y} width={w} height={h} fill={bright ? "#dcdc2a" : "#bba777"} />
    ))}
  </svg>
);

const Trash = () => (
  <svg viewBox="0 0 92 114" className="-mb-[2px] h-[114px] w-[92px]">
    <defs>
      <linearGradient id="tr" x1="0" y1="0" x2="0" y2="1">
        <stop offset="0" stopColor="#555b62" />
        <stop offset=".75" stopColor="#5c6167" />
        <stop offset="1" stopColor="#888c90" />
      </linearGradient>
    </defs>
    <path d="M.5 12 11 98q2 15 35 15t35-15L91.500 12z" fill="url(#tr)" />
    <path d="M11 90Q12 108 46 108t35-18l-1 10q-4 13-34 13T12 100z" fill="#9da1a4" opacity=".35" />
    <ellipse cx="46" cy="11.500" rx="45.200" ry="10.500" fill="#3c434b" stroke="#858a8f" strokeWidth="1.400" />
  </svg>
);

const apps: { icon: () => React.JSX.Element; running?: boolean }[] = [
  { icon: Finder, running: true },
  { icon: Launchpad },
  { icon: ChromeApp, running: true },
  { icon: Terminal, running: true },
  { icon: VsCode, running: true },
  { icon: Settings },
  { icon: Capture },
  { icon: Telegram, running: true },
  { icon: Teams },
  { icon: Preview, running: true },
  { icon: DiskUtility, running: true },
];

function DockItem({ icon: Icon, running }: { icon: () => React.JSX.Element; running?: boolean }) {
  return (
    <div className="relative flex h-[144px] w-[136px] shrink-0 items-center justify-center">
      <Icon />
      {running && <span className="absolute -bottom-[8px] size-2 rounded-full bg-[#98a0aa]" />}
    </div>
  );
}

function Dock() {
  return (
    <div className="relative mt-[2px] flex h-[158px] w-[1976px] items-start rounded-[46px] border-2 border-[#3a434d] bg-linear-to-b from-[#151b23] to-[#121d2d] pl-1">
      {apps.map((a, i) => (
        <DockItem key={i} {...a} />
      ))}
      <div className="flex h-[154px] w-[60px] shrink-0 items-center justify-center">
        <span className="h-[118px] w-[2px] bg-[#4b535d]" />
      </div>
      <DockItem icon={TxtStack} />
      <DockItem icon={DocStack} />
      <DockItem icon={Trash} />
    </div>
  );
}

export default function App() {
  return (
    <div className="flex h-[1800px] w-[2880px] flex-col overflow-hidden bg-[#04172b] font-['Inter',sans-serif]">
      <MenuBar />
      <div className="-mb-[22px] flex h-[22px] shrink-0 bg-[#04193a]" />
      <section className="relative z-10 flex h-[1580px] shrink-0 flex-col overflow-hidden rounded-[20px] border-2 border-[#5d5e61] bg-[#323232]">
        <TabStrip />
        <Toolbar />
        <BookmarksBar />
        <Page />
      </section>
      <div className="relative -mt-5 flex h-[190px] shrink-0 justify-center bg-linear-to-r from-[#041c33] via-[#01101f] to-[#04182a] pt-5">
        <svg className="absolute inset-0 h-full w-full opacity-30 mix-blend-soft-light">
          <filter id="sea">
            <feTurbulence type="fractalNoise" baseFrequency="0.08 0.2" numOctaves="4" seed="7" />
            <feColorMatrix type="saturate" values="0" />
          </filter>
          <rect width="100%" height="100%" filter="url(#sea)" />
        </svg>
        <div className="absolute inset-0 bg-linear-to-b from-black/90 via-black/35 via-45% to-transparent" />
        <Dock />
      </div>
    </div>
  );
}
